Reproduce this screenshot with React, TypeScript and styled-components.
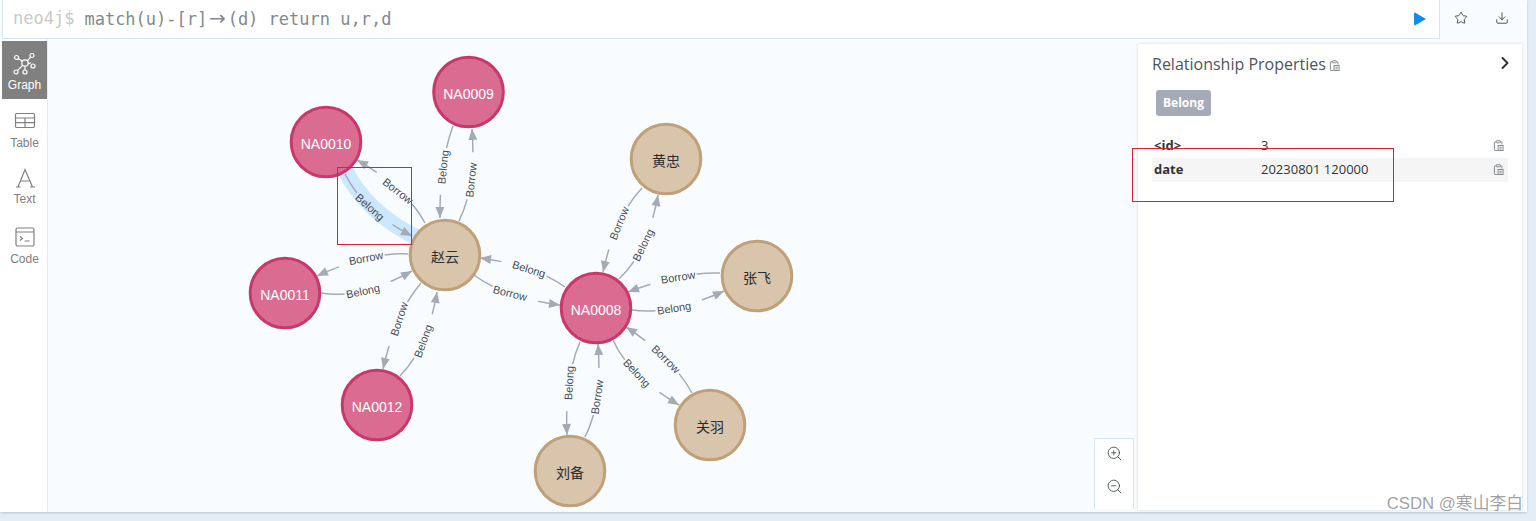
import React from 'react';
import styled, { createGlobalStyle } from 'styled-components';
import { Star, Download, ChevronRight, ZoomIn, ZoomOut } from 'lucide-react';

const GlobalStyle = createGlobalStyle`
  html, body {
    margin: 0;
    padding: 0;
    background: #e4edf5;
    overflow: hidden;
  }
`;

const Page = styled.div`
  position: relative;
  width: 1536px;
  height: 521px;
  background: #e4edf5;
  font-family: 'Open Sans', 'Noto Sans CJK SC', sans-serif;
  overflow: hidden;
`;

const Frame = styled.div`
  display: flex;
  flex-direction: column;
  width: 1527px;
  height: 512px;
  background: #f9fcff;
  box-shadow: 0 1px 2px rgba(120, 140, 160, 0.4);
`;

const TopBar = styled.div`
  display: flex;
  height: 39px;
  flex-shrink: 0;
`;

const Editor = styled.div`
  flex: 1;
  display: flex;
  align-items: center;
  margin-left: 2px;
  padding: 0 13px 2px 10px;
  background: #fff;
  border-left: 1px solid #d7e5f1;
  border-right: 1px solid #d7e5f1;
  border-bottom: 1px solid #d7e5f1;
  font-family: 'DejaVu Sans Mono', monospace;
  font-size: 17px;
  white-space: pre;
`;

const Prompt = styled.span`
  color: #c9c9c9;
  margin-right: 10px;
`;

const Command = styled.span`
  color: #7f8a92;
`;

const Ligature = styled.span`
  display: inline-block;
  width: 20.4px;
  text-align: center;
  font-family: 'DejaVu Sans', sans-serif;
  font-size: 20px;
  line-height: 1;
`;

const PlayButton = styled.div`
  margin-left: auto;
  margin-top: 2px;
  width: 0;
  height: 0;
  border-left: 12px solid #0e8bf5;
  border-top: 7px solid transparent;
  border-bottom: 7px solid transparent;
  border-radius: 2px;
`;

const Actions = styled.div`
  width: 87px;
  display: flex;
  align-items: center;
  padding: 0 0 4px 14px;
  gap: 27px;
  box-sizing: border-box;
  color: #333;
`;

const Body = styled.div`
  flex: 1;
  display: flex;
  min-height: 0;
`;

const Sidebar = styled.div`
  width: 48px;
  flex-shrink: 0;
  box-sizing: border-box;
  padding: 2px 0 0 2px;
  background: #fff;
  border-right: 1px solid #e3ecf4;
`;

const NavItem = styled.div<{ $active?: boolean }>`
  height: 58px;
  width: 45px;
  display: flex;
  flex-direction: column;
  align-items: center;
  padding-top: 10px;
  box-sizing: border-box;
  background: ${(p) => (p.$active ? '#808080' : 'transparent')};
  color: ${(p) => (p.$active ? '#fff' : '#808080')};
`;

const NavIcon = styled.svg<{ $height?: number }>`
  width: 24px;
  height: ${(p) => p.$height ?? 24}px;
  fill: none;
  stroke: currentColor;
  stroke-width: 1.2;
`;

const NavLabel = styled.span`
  font-family: 'Liberation Sans', sans-serif;
  font-size: 12px;
  line-height: 16px;
  margin-top: 2px;
`;

const Canvas = styled.div`
  position: relative;
  flex: 1;
  min-width: 0;
  overflow: hidden;
`;

const GraphSvg = styled.svg`
  display: block;
  width: 100%;
  height: 100%;
`;

const EdgeLine = styled.path`
  fill: none;
  stroke: #a5abb6;
  stroke-width: 1.5;
`;

const Highlight = styled.path`
  fill: none;
  stroke: #cce8ff;
  stroke-width: 16;
`;

const EdgeLabel = styled.text`
  font-family: 'Liberation Sans', sans-serif;
  font-size: 11px;
  fill: #484d55;
  text-anchor: middle;
  dominant-baseline: central;
`;

const NodeLabel = styled.text<{ $person?: boolean }>`
  font-family: 'Liberation Sans', 'Noto Sans CJK SC', sans-serif;
  font-size: 14px;
  fill: ${(p) => (p.$person ? '#2a2c34' : '#fff')};
  text-anchor: middle;
  dominant-baseline: central;
`;

const ZoomBox = styled.div`
  position: absolute;
  right: 4px;
  bottom: 3px;
  width: 40px;
  height: 71px;
  box-sizing: border-box;
  padding-top: 6px;
  display: flex;
  flex-direction: column;
  align-items: center;
  gap: 16px;
  background: #fff;
  border: 1px solid #d7e5f1;
  border-bottom: none;
  color: #2f3a4a;
`;

const Panel = styled.div`
  width: 384px;
  flex-shrink: 0;
  margin: 5px 5px 2px 0;
  box-sizing: border-box;
  padding: 9px 14px 0;
  background: #fff;
  box-shadow: 0 0 3px rgba(150, 170, 190, 0.4);
`;

const PanelHeader = styled.div`
  display: flex;
  align-items: center;
  height: 22px;
  color: #50555c;
  font-size: 16px;
`;

const CopyIcon = styled.svg<{ $size?: number }>`
  width: ${(p) => p.$size ?? 11}px;
  height: ${(p) => p.$size ?? 11}px;
  fill: none;
  stroke: #7d8288;
  stroke-width: 1;
  flex-shrink: 0;
`;

const TitleIcon = styled.span`
  display: flex;
  margin: 3px 0 0 3px;
`;

const Collapse = styled.span`
  display: flex;
  margin-left: auto;
  margin-right: -7px;
  margin-top: -3px;
  color: #333;
`;

const Badge = styled.span`
  display: block;
  width: fit-content;
  margin: 15px 0 0 4px;
  padding: 0 7px;
  height: 26px;
  line-height: 25px;
  background: #a5abb6;
  border-radius: 3px;
  color: #fff;
  font-size: 12px;
  font-weight: 700;
`;

const PropTable = styled.div`
  margin-top: 18px;
`;

const PropRow = styled.div<{ $odd?: boolean }>`
  display: flex;
  align-items: center;
  height: 24px;
  box-sizing: border-box;
  padding: 0 4px 2px 2px;
  background: ${(p) => (p.$odd ? '#f5f5f5' : 'transparent')};
  color: #333;
  font-size: 13px;
`;

const PropKey = styled.span`
  width: 107px;
  font-weight: 700;
`;

const PropValue = styled.span`
  flex: 1;
`;

const Annotation = styled.div<{ $x: number; $y: number; $w: number; $h: number }>`
  position: absolute;
  left: ${(p) => p.$x}px;
  top: ${(p) => p.$y}px;
  width: ${(p) => p.$w}px;
  height: ${(p) => p.$h}px;
  box-sizing: border-box;
  border: 1px solid #e2202c;
  pointer-events: none;
`;

const Watermark = styled.span`
  position: absolute;
  right: 13px;
  bottom: 7px;
  font-family: 'Liberation Sans', 'Noto Sans CJK SC', sans-serif;
  font-size: 16.8px;
  line-height: 20px;
  color: rgba(100, 100, 100, 0.62);
`;

type Pt = [number, number];

const nodes: { label: string; x: number; y: number; person?: boolean }[] = [
  { label: 'NA0009', x: 468.5, y: 92 },
  { label: 'NA0010', x: 326, y: 142 },
  { label: 'NA0011', x: 285, y: 293 },
  { label: 'NA0012', x: 377, y: 405 },
  { label: 'NA0008', x: 596, y: 308 },
  { label: '赵云', x: 445, y: 255, person: true },
  { label: '黄忠', x: 666, y: 159, person: true },
  { label: '张飞', x: 757, y: 276, person: true },
  { label: '关羽', x: 710, y: 425, person: true },
  { label: '刘备', x: 570, y: 471, person: true },
];

// start, control, tip, label centre, label angle
const edges: { text: string; p0: Pt; c: Pt; p2: Pt; l: Pt; a: number }[] = [
  { text: 'Belong', p0: [345, 174], c: [363.5, 211], p2: [412, 236], l: [370, 207], a: 42 },
  { text: 'Borrow', p0: [425, 223], c: [407, 188.5], p2: [357, 160], l: [398, 191], a: 38 },
  { text: 'Belong', p0: [453, 126], c: [439.5, 162], p2: [440, 218], l: [443, 167], a: -84 },
  { text: 'Borrow', p0: [459, 221], c: [476.5, 185.5], p2: [472, 129], l: [471, 180], a: -84 },
  { text: 'Borrow', p0: [408, 254], c: [369.5, 252], p2: [317, 276], l: [366, 258], a: -11 },
  { text: 'Belong', p0: [321, 293], c: [359.5, 300], p2: [412, 271], l: [363, 291], a: -12 },
  { text: 'Belong', p0: [565, 287], c: [535.5, 265.5], p2: [480, 258], l: [529, 269], a: 17 },
  { text: 'Borrow', p0: [474, 275], c: [503, 297], p2: [560, 305], l: [510, 293], a: 14 },
  { text: 'Borrow', p0: [642, 188], c: [615.5, 216], p2: [603, 272], l: [619, 223], a: -68 },
  { text: 'Belong', p0: [619, 279], c: [647.5, 253], p2: [658, 195], l: [643, 245], a: -64 },
  { text: 'Borrow', p0: [720, 273], c: [682, 271.5], p2: [628, 292], l: [678, 277], a: -9 },
  { text: 'Belong', p0: [632, 310], c: [670, 315.5], p2: [724, 291], l: [674, 308], a: -9 },
  { text: 'Borrow', p0: [421, 283], c: [396, 312], p2: [383, 369], l: [399, 319], a: -72 },
  { text: 'Belong', p0: [400, 376], c: [427.5, 348], p2: [437, 292], l: [423, 341], a: -70 },
  { text: 'Belong', p0: [580, 342], c: [564.5, 377.5], p2: [567, 435], l: [569, 383], a: -87 },
  { text: 'Borrow', p0: [585, 437], c: [602.5, 403.5], p2: [598, 344], l: [597, 397], a: -82 },
  { text: 'Belong', p0: [613, 340], c: [628, 374.5], p2: [679, 405], l: [637, 373], a: 47 },
  { text: 'Borrow', p0: [692, 393], c: [673, 358], p2: [626, 327], l: [666, 359], a: 44 },
];

const quad = (e: { p0: Pt; c: Pt; p2: Pt }) =>
  `M${e.p0[0]} ${e.p0[1]}Q${e.c[0]} ${e.c[1]} ${e.p2[0]} ${e.p2[1]}`;

const arrowHead = (c: Pt, tip: Pt) => {
  const ang = Math.atan2(tip[1] - c[1], tip[0] - c[0]);
  const ux = Math.cos(ang);
  const uy = Math.sin(ang);
  const bx = tip[0] - ux * 11;
  const by = tip[1] - uy * 11;
  return `${tip[0]},${tip[1]} ${bx - uy * 4.5},${by + ux * 4.5} ${bx + uy * 4.5},${by - ux * 4.5}`;
};

const gapDash = (e: { p0: Pt; p2: Pt }) => {
  const len = Math.hypot(e.p2[0] - e.p0[0], e.p2[1] - e.p0[1]) * 1.02;
  const g = 24 / len;
  return `${0.5 - g} ${2 * g} 1`;
};

const Copy = ({ size }: { size?: number }) => (
  <CopyIcon $size={size} viewBox="0 0 12 12">
    <path d="M3.5 2H2.2a.7.7 0 0 0-.7.7v8a.7.7 0 0 0 .7.7H5" />
    <path d="M8 2h1a.7.7 0 0 1 .7.7V5" />
    <rect x="3.5" y="0.8" width="4.5" height="2.2" rx="0.5" />
    <rect x="5.5" y="6" width="5.5" height="5.4" />
    <path d="M7 8h2.5M7 9.7h2.5" />
  </CopyIcon>
);

const GraphIcon = () => (
  <NavIcon viewBox="0 0 24 24">
    <circle cx="12" cy="12" r="3.2" />
    <circle cx="3.5" cy="6.5" r="2" />
    <circle cx="19" cy="4.5" r="2" />
    <circle cx="20" cy="15" r="2" />
    <circle cx="12" cy="21" r="2" />
    <circle cx="3" cy="21" r="2" />
    <path d="M9.3 10.3 5.2 7.6M14.4 9.8l3.2-3.9M15.1 12.8l3-1.1M12 15.2V19M9.7 14.4l-5.3 5.1" />
  </NavIcon>
);

const TableIcon = () => (
  <NavIcon viewBox="0 0 24 24">
    <rect x="2.5" y="4.5" width="19" height="14" rx="1.2" />
    <path d="M2.5 9h19M2.5 13.7h19M12 9v9.5" />
  </NavIcon>
);

const TextIcon = () => (
  <NavIcon $height={22} viewBox="0 0 24 22" strokeWidth={0.9}>
    <path d="M5 20 12 2.5 19.5 20M7.6 14h9M3 20h4.5M17 20h5" />
  </NavIcon>
);

const CodeIcon = () => (
  <NavIcon viewBox="0 0 24 24">
    <rect x="3" y="3" width="18" height="18" rx="1.6" />
    <path d="M3 7h18M7 11.5l2.5 2-2.5 2M11.5 16h5" />
  </NavIcon>
);

const App = () => {
  return (
    <Page>
      <GlobalStyle />
      <Frame>
        <TopBar>
          <Editor>
            <Prompt>neo4j$</Prompt>
            <Command>
              match(u)-[r]<Ligature>→</Ligature>(d) return u,r,d
            </Command>
            <PlayButton />
          </Editor>
          <Actions>
            <Star size={14} strokeWidth={1.4} />
            <Download size={14} strokeWidth={1.4} />
          </Actions>
        </TopBar>
        <Body>
          <Sidebar>
            <NavItem $active>
              <GraphIcon />
              <NavLabel>Graph</NavLabel>
            </NavItem>
            <NavItem>
              <TableIcon />
              <NavLabel>Table</NavLabel>
            </NavItem>
            <NavItem>
              <TextIcon />
              <NavLabel>Text</NavLabel>
            </NavItem>
            <NavItem>
              <CodeIcon />
              <NavLabel>Code</NavLabel>
            </NavItem>
          </Sidebar>
          <Canvas>
            <GraphSvg viewBox="48 39 1090 473" preserveAspectRatio="xMinYMin meet">
              <Highlight d="M344 168Q366 213 418 238" />
              {edges.map((e) => (
                <g key={`${e.text}-${e.p0[0]}-${e.p0[1]}`}>
                  <EdgeLine d={quad(e)} pathLength={1} strokeDasharray={gapDash(e)} />
                  <polygon points={arrowHead(e.c, e.p2)} fill="#a5abb6" />
                  <EdgeLabel transform={`translate(${e.l[0]} ${e.l[1]}) rotate(${e.a})`}>
                    {e.text}
                  </EdgeLabel>
                </g>
              ))}
              {nodes.map((n) => (
                <g key={n.label}>
                  <circle
                    cx={n.x}
                    cy={n.y}
                    r={34.8}
                    strokeWidth={3}
                    fill={n.person ? '#d8c5ab' : '#da6c92'}
                    stroke={n.person ? '#bfa078' : '#c9386a'}
                  />
                  <NodeLabel x={n.x} y={n.y + 2} $person={n.person}>
                    {n.label}
                  </NodeLabel>
                </g>
              ))}
            </GraphSvg>
            <ZoomBox>
              <ZoomIn size={17} strokeWidth={1.1} />
              <ZoomOut size={17} strokeWidth={1.1} />
            </ZoomBox>
          </Canvas>
          <Panel>
            <PanelHeader>
              Relationship Properties
              <TitleIcon>
                <Copy />
              </TitleIcon>
              <Collapse>
                <ChevronRight size={20} strokeWidth={2.4} />
              </Collapse>
            </PanelHeader>
            <Badge>Belong</Badge>
            <PropTable>
              <PropRow>
                <PropKey>&lt;id&gt;</PropKey>
                <PropValue>3</PropValue>
                <Copy />
              </PropRow>
              <PropRow $odd>
                <PropKey>date</PropKey>
                <PropValue>20230801 120000</PropValue>
                <Copy />
              </PropRow>
            </PropTable>
          </Panel>
        </Body>
      </Frame>
      <Annotation $x={337} $y={167} $w={75} $h={78} />
      <Annotation $x={1132} $y={148} $w={262} $h={54} />
      <Watermark>CSDN @寒山李白</Watermark>
    </Page>
  );
};

export default App;
